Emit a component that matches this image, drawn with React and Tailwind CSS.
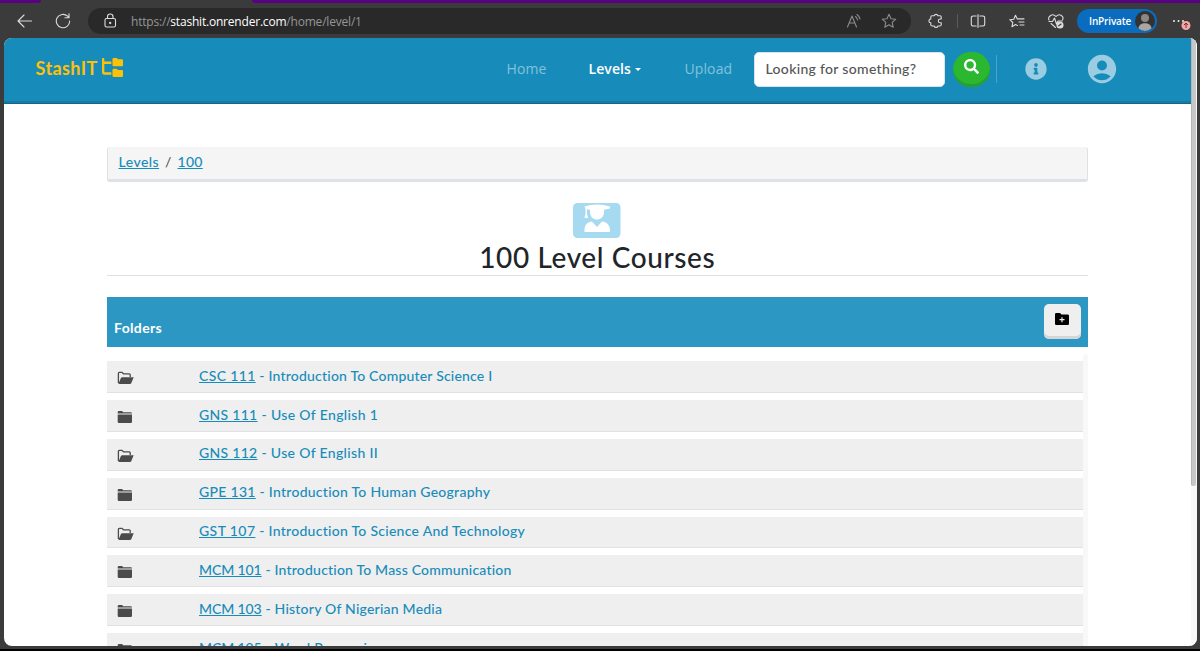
import { FaSearch, FaInfoCircle } from "react-icons/fa";
import { FaFolderTree } from "react-icons/fa6";
import { MdAccountCircle } from "react-icons/md";

const courses = [
  { code: "CSC 111", title: "Introduction To Computer Science I", open: true, codeTracking: "tracking-[0.35px]", titleTracking: "tracking-[0.2px]" },
  { code: "GNS 111", title: "Use Of English 1", open: false, codeTracking: "tracking-[0.3px]", titleTracking: "tracking-[0.35px]" },
  { code: "GNS 112", title: "Use Of English II", open: true, codeTracking: "tracking-[0.3px]", titleTracking: "tracking-[0.33px]" },
  { code: "GPE 131", title: "Introduction To Human Geography", open: false, codeTracking: "tracking-[0.3px]", titleTracking: "tracking-[0.26px]" },
  { code: "GST 107", title: "Introduction To Science And Technology", open: true, codeTracking: "tracking-[0.4px]", titleTracking: "tracking-[0.28px]" },
  { code: "MCM 101", title: "Introduction To Mass Communication", open: false, codeTracking: "tracking-[-0.1px]", titleTracking: "tracking-[0.2px]" },
  { code: "MCM 103", title: "History Of Nigerian Media", open: false, codeTracking: "tracking-[-0.1px]", titleTracking: "tracking-[0.22px]" },
  { code: "MCM 105", title: "Word Processing", open: false, codeTracking: "tracking-[-0.1px]", titleTracking: "tracking-[0.3px]" },
];

export default function App() {
  return (
    <div className="flex h-[651px] w-[1200px] flex-col overflow-hidden border-b-2 border-black bg-[#3b3b3b] font-['Open_Sans',sans-serif]">
      <BrowserBar />
      <div className="ml-[3.5px] flex h-[607.5px] w-[1193px] shrink-0 overflow-hidden rounded-lg bg-white">
        <div className="flex w-[1187.5px] flex-col overflow-hidden">
          <Navbar />
          <CoursesPage />
        </div>
        <div className="w-1.5 bg-[#f8f8f8]">
          <div className="h-[448px] w-[5px] rounded-b-sm border-l border-[#b5b5b5] bg-[#c7c7c7]" />
        </div>
      </div>
    </div>
  );
}

function BrowserBar() {
  return (
    <header className="h-[38px] shrink-0">
      <div className="flex h-1 justify-between">
        <div className="h-[3px] w-[41px] rounded-br-sm bg-[#580281]" />
        <div className="h-[3px] w-[948px] rounded-bl-sm bg-[#580281]" />
      </div>
      <div className="flex h-[34px] items-center text-[#dcdcdc]">
        <Icon className="ml-[17px] h-4 w-4">
          <path d="M14.5 8H1M7 2 1 8l6 6" />
        </Icon>
        <Icon className="ml-[22px] h-4 w-4">
          <path d="M14.7 8A6.7 6.7 0 1 1 12.6 3.2L14 4.7M14 .8v4h-4" />
        </Icon>
        <div className="ml-[17px] flex h-[26px] w-[823px] items-center rounded-full bg-[#292929]">
          <Icon className="ml-3.5 h-4 w-4">
            <rect x="3" y="5.5" width="10.5" height="8.5" rx="1.5" />
            <path d="M5.5 5.5V3.8a2.7 2.7 0 0 1 5.5 0v1.7" />
            <circle cx="8.2" cy="10" r=".6" fill="currentColor" />
          </Icon>
          <p className="ml-[13px] w-[600px] whitespace-nowrap pt-px text-[12px] leading-4 tracking-[-0.2px] text-[#969696]">
            https://<span className="text-white">stashit.onrender.com</span>/home/level/1
          </p>
          <Icon className="ml-[115px] h-4 w-4 text-[#8c8c8c]">
            <path d="M1.5 14 6 3l4.5 11M3.2 10h5.6M9.5 3.5a5 5 0 0 1 2 3.5M11 1.5A8 8 0 0 1 14 6" />
          </Icon>
          <Icon className="ml-[19px] h-4 w-4 text-[#8c8c8c]">
            <path d="m8 1.3 2 4.4 4.8.5-3.6 3.2 1 4.8L8 11.8l-4.2 2.4 1-4.8-3.6-3.2L6 5.7Z" />
          </Icon>
        </div>
        <Icon className="ml-[17px] h-4 w-4">
          <path d="M4 2.8h2.2a1.9 1.9 0 0 1 3.7 0H12q1.2 0 1.2 1.2v2h-1a1.9 1.9 0 0 0 0 3.8h1v2q0 1.2-1.2 1.2H9.9a1.9 1.9 0 0 1-3.7 0H4q-1.2 0-1.2-1.2V9.8a1.9 1.9 0 0 1 0-3.8V4q0-1.2 1.2-1.2Z" />
        </Icon>
        <div className="ml-[13px] h-3.5 w-px bg-[#5b5b5b]" />
        <Icon className="ml-3 h-4 w-4">
          <path d="M6.200 3H3a1.7 1.7 0 0 0-1.700 1.700v6.600A1.7 1.7 0 0 0 3 13h3.200M9.800 3H13a1.7 1.7 0 0 1 1.700 1.700v6.600A1.7 1.7 0 0 1 13 13H9.800M8 1.500v13" />
        </Icon>
        <Icon className="ml-[23px] h-4 w-4">
          <path d="M8.500 12.500 6.500 11.500 3 13.700l.8-4.200L.8 6.700l4-.5L6.500 2.300l1.800 3.600h6.700M10 9h5M11 12h4" />
        </Icon>
        <Icon className="ml-[23px] h-4 w-4">
          <path d="M1 7C-.5 3.500 4.500-.5 8 3.500 11.500-.5 16.500 3.500 14.500 7M1 8.500h3.500L6.500 5l2 6 1.500-3h4M3 10.500l4.500 4" />
          <circle cx="12" cy="12" r="3" fill="currentColor" />
          <path d="m10.700 12.800 2.400-1.800" stroke="#3b3b3b" />
        </Icon>
        <div className="ml-[13px] flex h-6 w-20 items-center rounded-full bg-[#0a6cbf]">
          <span className="ml-3 w-[42px] whitespace-nowrap text-[10px] font-semibold leading-4 tracking-[-0.15px] text-white">InPrivate</span>
          <svg viewBox="0 0 20 20" className="ml-1 h-5 w-5" aria-hidden="true">
            <circle cx="10" cy="10" r="10" fill="#343231" />
            <circle cx="10" cy="7" r="4" fill="#8b8784" />
            <path d="M3.5 17.5c0-7 13-7 13 0a10 10 0 0 1-13 0Z" fill="#aaa6a2" />
          </svg>
        </div>
        <svg viewBox="0 0 22 18" className="ml-3.5 h-[18px] w-[22px]" aria-hidden="true">
          <circle cx="3" cy="9" r="1" fill="#eee" />
          <circle cx="7.5" cy="9" r="1" fill="#eee" />
          <circle cx="12" cy="9" r="1" fill="#eee" />
          <circle cx="15" cy="13.5" r="4.5" fill="#f4a7a4" />
          <path d="M15 16v-5m-2 2 2-2 2 2" fill="none" stroke="#6d3030" />
        </svg>
      </div>
    </header>
  );
}

function Navbar() {
  return (
    <nav className="flex h-[66px] shrink-0 items-center border-b border-[#1a6488] bg-[#178cba] pb-[3px] text-[14px] leading-5 text-[#83c2dc] shadow-[inset_0_-2px_0_#147ca6]">
      <a href="#" className="ml-8 flex w-[90px] items-center pb-[3px] text-[#ffc107]">
        <span className="w-[66px] whitespace-nowrap font-['Lato',sans-serif] text-[18px] font-bold tracking-[0.4px]">StashIT</span>
        <FaFolderTree className="h-[19px] w-[21px]" preserveAspectRatio="none" />
      </a>
      <div className="ml-[381px] flex tracking-[0.1px]">
        <a href="#" className="w-[82px] whitespace-nowrap">Home</a>
        <a href="#" className="flex w-[96px] items-center whitespace-nowrap font-semibold tracking-[0.1px] text-white">
          Levels
          <span className="ml-1 border-x-[3.5px] border-t-[3.5px] border-x-transparent" />
        </a>
        <a href="#" className="w-[69px] whitespace-nowrap">Upload</a>
      </div>
      <input
        type="text"
        placeholder="Looking for something?"
        aria-label="Search"
        className="h-[35px] w-[191px] rounded-[5px] border border-[#dce2e8] bg-white pb-0.5 pl-[11px] font-['Lato',sans-serif] text-[14px] font-medium tracking-[0.32px] text-[#555] placeholder:text-[#555]"
      />
      <button
        type="button"
        aria-label="Submit search"
        className="ml-2 grid h-[35px] w-[37px] place-items-center rounded-full bg-[#2bb730] pb-1.5 text-white shadow-[inset_0_-3px_0_#279d35]"
      >
        <FaSearch className="h-[15px] w-[15px]" />
      </button>
      <div className="ml-[6px] h-7 w-px bg-[#48a4c9]" />
      <FaInfoCircle className="mb-px ml-7 h-[22px] w-[22px] text-[#9acde1]" />
      <MdAccountCircle className="mb-px ml-[38.5px] h-[34px] w-[34px] text-[#9acde1]" />
    </nav>
  );
}

function CoursesPage() {
  return (
    <main className="ml-[103.5px] flex w-[980.5px] flex-col pt-[43px] font-['Lato',sans-serif]">
      <div className="flex h-[35px] items-center gap-[6px] rounded-[3px] border-b-[3px] border-l border-r border-[#dee2e8] bg-[#f5f5f5] pb-[3px] pl-[10.5px] text-[14px] font-medium text-[#555]">
        <a href="#" className="tracking-[0.45px] text-[#178cba] underline">Levels</a>
        <span>/</span>
        <a href="#" className="tracking-[0.3px] text-[#178cba] underline">100</a>
      </div>
      <div className="flex h-[94px] flex-col items-center border-b border-[#dfdfdf] pt-[21px] text-[#212529]">
        <GraduateIcon />
        <h1 className="mt-px whitespace-nowrap text-[28px] leading-9 font-medium tracking-[0.6px]">100 Level Courses</h1>
      </div>
      <section className="mt-[21px]">
        <div className="flex h-[50px] items-start justify-between bg-[#2c97c2] px-[7px] pt-[7px]">
          <h2 className="mt-[14px] text-[14px] leading-5 font-bold tracking-[0.35px] text-white">Folders</h2>
          <button
            type="button"
            aria-label="Add folder"
            className="grid h-[35px] w-[37px] place-items-center rounded-[5px] bg-[#efefef] pb-[5px] text-black shadow-[inset_0_-3px_0_#d5d5d5]"
          >
            <AddFolderIcon />
          </button>
        </div>
        <div className="mt-[7px] flex h-[300px] justify-between">
          <ul className="flex w-[975.5px] flex-col gap-[7px] pt-[7px]">
            {courses.map((course) => (
              <CourseRow key={course.code} course={course} />
            ))}
          </ul>
          <div className="w-[5px] rounded-t-full bg-[#f8f8f8]" />
        </div>
      </section>
    </main>
  );
}

function CourseRow({ course }) {
  return (
    <li className="flex h-[31.9px] shrink-0 items-center border-b border-[#dee2e6] bg-[#efefef] pl-2.5">
      {course.open ? <OpenFolderIcon /> : <FolderIcon />}
      <a href="#" className="ml-[65px] whitespace-nowrap pb-[1.5px] text-[14px] leading-5 font-medium text-[#178cba]">
        <span className={`underline ${course.codeTracking}`}>{course.code}</span>
        <span className={course.titleTracking}> - {course.title}</span>
      </a>
    </li>
  );
}

function Icon({ children, className }) {
  return (
    <svg
      viewBox="0 0 16 16"
      className={`shrink-0 ${className}`}
      fill="none"
      stroke="currentColor"
      strokeWidth="1.1"
      strokeLinecap="round"
      strokeLinejoin="round"
      aria-hidden="true"
    >
      {children}
    </svg>
  );
}

function AddFolderIcon() {
  return (
    <svg viewBox="0 0 14 12" className="h-3 w-3.5" aria-hidden="true">
      <path d="M1.300 0H5l1.500 1.500h6.200Q14 1.500 14 2.800v7.900Q14 12 12.700 12H1.300Q0 12 0 10.700V1.300Q0 0 1.300 0Z" fill="currentColor" />
      <path d="M7 4.200v5M4.500 6.700h5" stroke="#efefef" strokeWidth="1.2" />
    </svg>
  );
}

function FolderIcon() {
  return (
    <svg viewBox="0 0 17 14" className="mt-[3px] h-3.5 w-[17px]" fill="#4b4b4b" aria-hidden="true">
      <path d="M.7 3.500V2.200Q.7 1 1.900 1H5l1.300 1.200h7.500Q15 2.200 15 3.500ZM.7 4.600H15v7.200Q15 13 13.800 13H1.900Q.7 13 .7 11.800Z" />
    </svg>
  );
}

function OpenFolderIcon() {
  return (
    <svg viewBox="0 0 17 14" className="mt-[3px] h-3.5 w-[17px]" fill="none" aria-hidden="true">
      <path d="M1.4 12V2.200q0-.9.9-.9H5l1.500 1.500h5.800q.9 0 .9.900V6" stroke="#4b4b4b" strokeWidth="1.3" />
      <path d="M5.2 6.300h11.500l-2.500 5.900q-.3.800-1.200.8H1.400l2.500-5.900q.4-.8 1.300-.8Z" fill="#4b4b4b" />
    </svg>
  );
}

function GraduateIcon() {
  return (
    <svg viewBox="0 0 48 35" className="h-[35px] w-12 shrink-0" aria-hidden="true">
      <rect width="47.5" height="35" rx="4.5" fill="#a5daf1" />
      <path
        d="M11.500 3.500Q24-.5 37 3.500v2l-6 1.300V9c0 10-14 10-14 0V6.800l-3-.6v4.300l1 4.500h-3.500l1-4.500V6ZM11.500 29v-2c0-5 3-8 7.500-8.500l5 5.500 5-5.500c4.500.5 8 3.500 8 8.500v2Z"
        fill="#fff"
      />
    </svg>
  );
}
